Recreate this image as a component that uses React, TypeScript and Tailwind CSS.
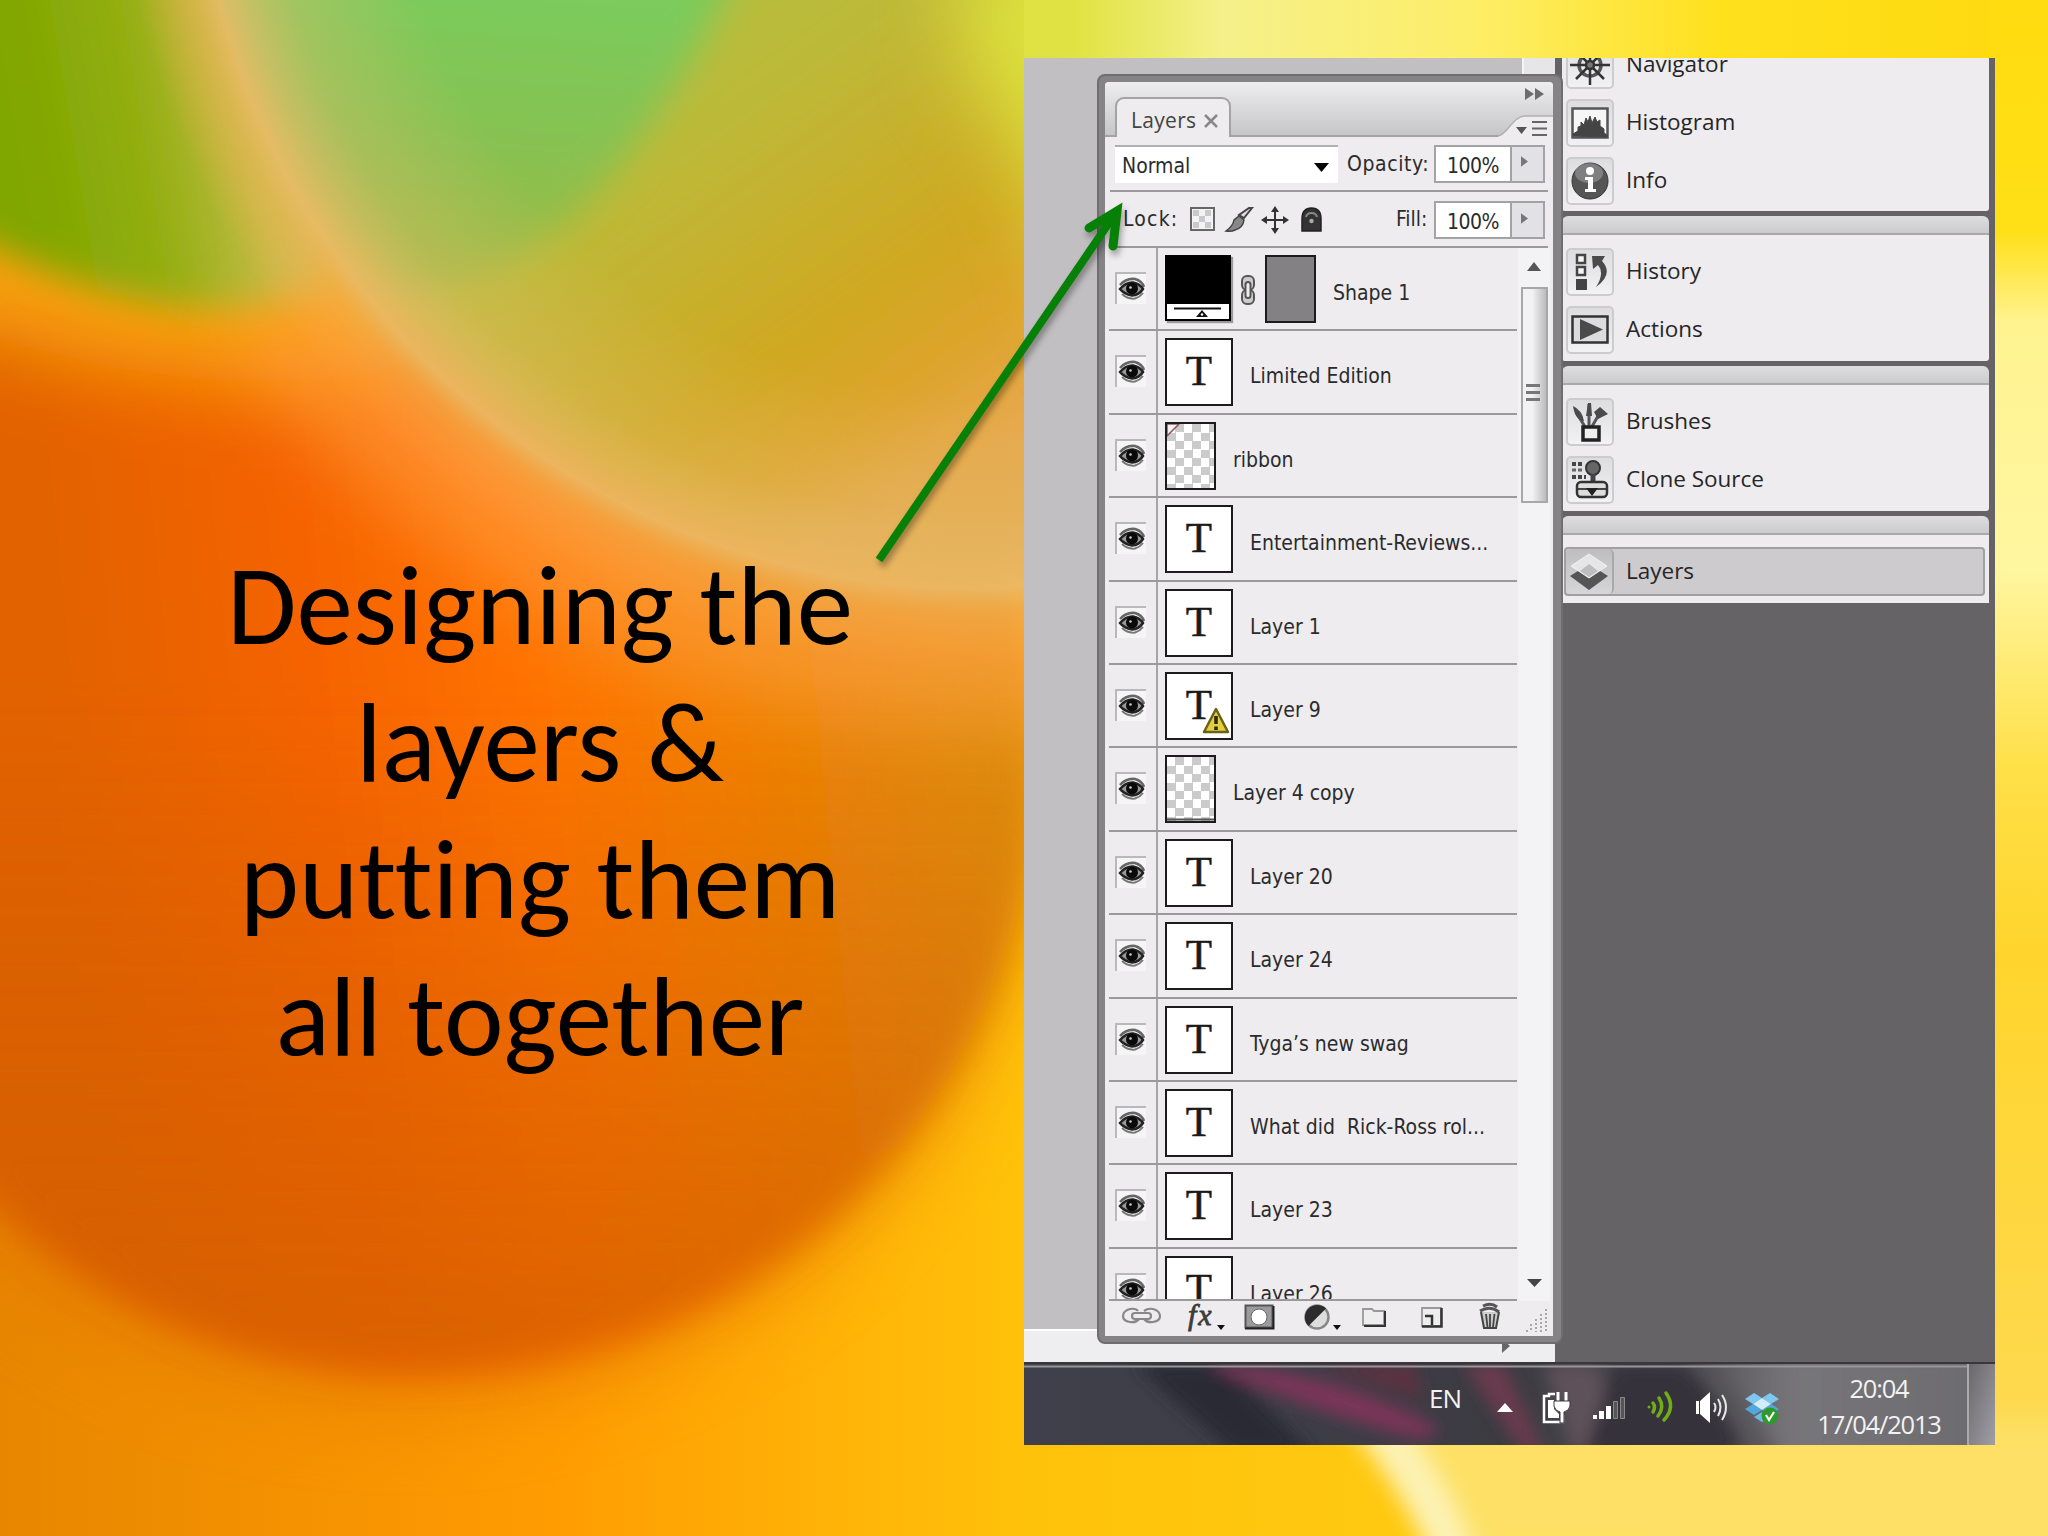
import type { ReactNode } from 'react';

type Thumb = 'shape' | 'text' | 'warning' | 'ribbon' | 'pixels';

interface Layer {
  name: string;
  thumb: Thumb;
}

const LAYERS: Layer[] = [
  { name: 'Shape 1', thumb: 'shape' },
  { name: 'Limited Edition', thumb: 'text' },
  { name: 'ribbon', thumb: 'ribbon' },
  { name: 'Entertainment-Reviews...', thumb: 'text' },
  { name: 'Layer 1', thumb: 'text' },
  { name: 'Layer 9', thumb: 'warning' },
  { name: 'Layer 4 copy', thumb: 'pixels' },
  { name: 'Layer 20', thumb: 'text' },
  { name: 'Layer 24', thumb: 'text' },
  { name: 'Tyga’s new swag', thumb: 'text' },
  { name: 'What did  Rick-Ross rol...', thumb: 'text' },
  { name: 'Layer 23', thumb: 'text' },
  { name: 'Layer 26', thumb: 'text' },
];

function Backdrop() {
  return (
    <svg className="absolute inset-0" width="2048" height="1536" viewBox="0 0 2048 1536" aria-hidden="true">
      <defs>
        <linearGradient id="base" x1="0" x2="1">
          <stop offset="0" stopColor="#e88600" />
          <stop offset="0.27" stopColor="#ff9c02" />
          <stop offset="0.5" stopColor="#ffc20a" />
          <stop offset="1" stopColor="#ffd61e" />
        </linearGradient>
        <linearGradient id="ball" gradientUnits="userSpaceOnUse" x1="0" y1="100" x2="1024" y2="0">
          <stop offset="0" stopColor="#e26200" />
          <stop offset="0.25" stopColor="#f56300" />
          <stop offset="0.45" stopColor="#ff7200" />
          <stop offset="0.62" stopColor="#f57e04" />
          <stop offset="0.8" stopColor="#e58808" />
          <stop offset="1" stopColor="#da920c" />
        </linearGradient>
        <linearGradient id="ballShade" gradientUnits="userSpaceOnUse" x1="0" y1="700" x2="0" y2="1380">
          <stop offset="0" stopColor="#c85a00" stopOpacity="0" />
          <stop offset="1" stopColor="#d46000" stopOpacity="0.8" />
        </linearGradient>
        <linearGradient id="lens" gradientUnits="userSpaceOnUse" x1="480" y1="80" x2="820" y2="560">
          <stop offset="0" stopColor="#b3c040" />
          <stop offset="0.3" stopColor="#bdb938" />
          <stop offset="0.68" stopColor="#d0a822" />
          <stop offset="0.85" stopColor="#dea42c" />
          <stop offset="1" stopColor="#e6a84c" />
        </linearGradient>
        <radialGradient id="rim" gradientUnits="userSpaceOnUse" cx="975" cy="-190" r="860">
          <stop offset="0.68" stopColor="#e0c070" stopOpacity="0" />
          <stop offset="0.82" stopColor="#e2bd6c" stopOpacity="0.35" />
          <stop offset="0.905" stopColor="#ecbb6a" stopOpacity="0.85" />
          <stop offset="0.93" stopColor="#f2b45c" stopOpacity="0.55" />
          <stop offset="1" stopColor="#ffaa4c" stopOpacity="0" />
        </radialGradient>
        <linearGradient id="mint" gradientUnits="userSpaceOnUse" x1="500" y1="0" x2="480" y2="270">
          <stop offset="0" stopColor="#7bcb5c" />
          <stop offset="0.5" stopColor="#86c252" />
          <stop offset="1" stopColor="#9cba44" />
        </linearGradient>
        <linearGradient id="leaf" gradientUnits="userSpaceOnUse" x1="0" y1="0" x2="240" y2="-40">
          <stop offset="0" stopColor="#80a600" />
          <stop offset="0.5" stopColor="#93ae10" />
          <stop offset="1" stopColor="#c8be50" />
        </linearGradient>
        <linearGradient id="topEdge" gradientUnits="userSpaceOnUse" x1="900" y1="0" x2="2048" y2="0">
          <stop offset="0" stopColor="#dae040" />
          <stop offset="0.15" stopColor="#e0e242" />
          <stop offset="0.28" stopColor="#f5f08a" />
          <stop offset="0.5" stopColor="#fdee68" />
          <stop offset="0.72" stopColor="#ffe01c" />
          <stop offset="1" stopColor="#fdd90e" />
        </linearGradient>
        <linearGradient id="rightEdge" x1="0" x2="0" y1="0" y2="1">
          <stop offset="0" stopColor="#ffdc10" />
          <stop offset="0.15" stopColor="#ffdf16" />
          <stop offset="0.21" stopColor="#fff390" />
          <stop offset="0.37" stopColor="#fff6a0" />
          <stop offset="0.5" stopColor="#ffe048" />
          <stop offset="0.62" stopColor="#ffd52c" />
          <stop offset="1" stopColor="#fdda58" />
        </linearGradient>
        <filter id="b8" x="-20%" y="-20%" width="140%" height="140%"><feGaussianBlur stdDeviation="8" /></filter>
        <filter id="b12" x="-100%" y="-60%" width="300%" height="220%"><feGaussianBlur stdDeviation="12" /></filter>
        <filter id="b18" x="-20%" y="-20%" width="140%" height="140%"><feGaussianBlur stdDeviation="18" /></filter>
        <filter id="b40" x="-50%" y="-50%" width="200%" height="200%"><feGaussianBlur stdDeviation="40" /></filter>
        <clipPath id="inLens"><circle cx="975" cy="-190" r="779" /></clipPath>
      </defs>
      <rect width="2048" height="1536" fill="url(#base)" />
      <circle cx="400" cy="770" r="640" fill="#e27800" opacity="0.6" filter="url(#b40)" />
      <circle cx="420" cy="753" r="618" fill="url(#ball)" filter="url(#b18)" />
      <circle cx="420" cy="753" r="618" fill="url(#ballShade)" filter="url(#b18)" />
      <path d="M-80 -80H420V360Q200 420 -80 310Z" fill="#f8a008" filter="url(#b40)" />
      <path d="M-60 -60H330V290Q170 350 -60 218Z" fill="url(#leaf)" filter="url(#b18)" />
      <path d="M300 280Q480 470 700 560Q860 610 1100 590V720Q800 730 600 640Q400 530 240 350Z" fill="#ffa448" opacity="0.6" filter="url(#b40)" />
      <circle cx="975" cy="-190" r="772" fill="url(#lens)" filter="url(#b18)" />
      <g clipPath="url(#inLens)">
        <path d="M190 -60H750Q700 60 630 150Q530 290 390 290Q290 200 190 -60Z" fill="url(#mint)" filter="url(#b18)" />
        <path d="M960 -60H1200V330H1090Q1040 160 960 60Z" fill="#dce03c" filter="url(#b40)" />
      </g>
      <circle cx="975" cy="-190" r="860" fill="url(#rim)" />
      <rect x="1024" width="1024" height="60" fill="url(#topEdge)" />
      <rect x="1990" width="58" height="1536" fill="url(#rightEdge)" />
      <path d="M1350 1420Q1400 1480 1440 1560H2100V1420Z" fill="#fde065" filter="url(#b12)" />
      <path d="M1350 1390Q1425 1470 1465 1580" fill="none" stroke="#fdf3b8" strokeWidth="40" filter="url(#b12)" />
    </svg>
  );
}

function PointerArrow() {
  return (
    <svg className="absolute top-[192px] left-[860px] drop-shadow-[2px_5px_3px_rgba(0,0,0,0.35)]" width="280" height="380" viewBox="860 192 280 380" fill="none" stroke="#068006" aria-hidden="true">
      <path d="M879 560L1115 214" strokeWidth="8" />
      <path d="M1089 228L1117 211L1113 246" strokeWidth="9" strokeLinecap="round" />
    </svg>
  );
}

function EyeIcon() {
  return (
    <svg width="28" height="24" viewBox="0 0 28 24" fill="none" aria-hidden="true">
      <path d="M2 8Q8 1 17 2Q24 4 26 10" stroke="#666" strokeWidth="2.500" />
      <path d="M2 12Q8 5 15 5.500Q22 7 25 12Q21 18 14 18.500Q6 17 2 12Z" fill="#999" stroke="#222" strokeWidth="2.500" />
      <circle cx="14" cy="11.500" r="6" fill="#0a0a0a" />
      <circle cx="12.500" cy="10.500" r="1.300" fill="#ccc" />
      <path d="M4 17Q10 22.500 17 21.500Q22 20 25 16" stroke="#777" strokeWidth="2" />
    </svg>
  );
}

function TextThumb({ warning = false }: { warning?: boolean }) {
  return (
    <div className="relative h-[68px] w-[68px] shrink-0 border-2 border-[#1c1c1c] bg-white text-center font-['Liberation_Serif',serif] text-[43px] leading-[62px] text-[#1a1a1a] [-webkit-text-stroke:0.5px_#1a1a1a]">
      T
      {warning && (
        <svg className="absolute right-[1px] bottom-[4px]" width="28" height="28" viewBox="0 0 28 28" aria-hidden="true">
          <path d="M14 3L26 26H2Z" fill="#e3cf3c" stroke="#6b6118" strokeWidth="2.500" strokeLinejoin="round" />
          <path d="M14 10V18M14 20.500V24" stroke="#2a2608" strokeWidth="3.500" />
        </svg>
      )}
    </div>
  );
}

function PixelThumb({ ribbon = false }: { ribbon?: boolean }) {
  return (
    <div className="h-[68px] w-[51px] shrink-0 border-2 border-[#1c1c1c] bg-white bg-[repeating-conic-gradient(#cbcbcb_0_25%,#fff_0_50%)] bg-[length:17px_17px]">
      <svg width="47" height="64" viewBox="0 0 47 64" fill="none" aria-hidden="true">
        {ribbon ? (
          <path d="M0 0H12L0 12Z" fill="#f6eef0" stroke="#8a5560" strokeWidth="1.500" />
        ) : (
          <path d="M0 62.500H47" stroke="#555" strokeWidth="2" />
        )}
      </svg>
    </div>
  );
}

function ShapeThumb() {
  return (
    <div className="flex shrink-0 items-start">
      <div className="flex h-[66px] w-[66px] flex-col justify-end border-2 border-black bg-black shadow-[2px_2px_1px_#999]">
        <svg className="bg-white" width="62" height="15" viewBox="0 0 62 15" aria-hidden="true">
          <path d="M7 4.500H54" stroke="#111" strokeWidth="2" />
          <path d="M35 6L41 13H29Z" fill="#111" />
          <circle cx="35" cy="10.500" r="1.200" fill="#fff" />
        </svg>
      </div>
      <svg className="mx-[7px] mt-[18px]" width="20" height="34" viewBox="0 0 20 34" fill="none" stroke="#555" strokeWidth="2" aria-hidden="true">
        <rect x="4" y="3" width="12" height="14" rx="5" fill="#ccc" />
        <rect x="4" y="17" width="12" height="14" rx="5" fill="#ccc" />
        <rect x="7.500" y="9" width="5" height="16" rx="2.500" fill="#eee" />
      </svg>
      <div className="h-[68px] w-[51px] border-2 border-[#1c1c1c] bg-[#838183]" />
    </div>
  );
}

function LayerThumb({ kind }: { kind: Thumb }) {
  if (kind === 'shape') return <ShapeThumb />;
  if (kind === 'ribbon') return <PixelThumb ribbon />;
  if (kind === 'pixels') return <PixelThumb />;
  return <TextThumb warning={kind === 'warning'} />;
}

function LayerRow({ layer }: { layer: Layer }) {
  return (
    <li className="flex h-[83.4px] shrink-0 border-b-2 border-[#9a999b]">
      <div className="w-[49px] shrink-0 border-r-2 border-[#a5a4a6] pt-[24px] pl-[6px]">
        <div className="flex h-[32px] w-[31px] items-center justify-center border-t-2 border-l-2 border-[#b9b8ba] bg-[#f6f5f6]">
          <EyeIcon />
        </div>
      </div>
      <div className="flex h-[75px] pt-[7px] pl-[7px]">
        <LayerThumb kind={layer.thumb} />
      </div>
      <span className="pt-[30px] pl-[17px] text-[21px] leading-[30px] whitespace-pre">{layer.name}</span>
    </li>
  );
}

function PercentField() {
  return (
    <div className="flex h-[38px] w-[111px] border-2 border-[#a3a2a4] bg-white">
      <span className="w-[74px] pt-px pl-[11px] text-[21px] leading-[36px] tracking-[-0.5px]">100%</span>
      <div className="flex flex-1 items-center justify-center border-l-2 border-[#a3a2a4] bg-[#e2e1e6] pr-[6px] pb-[4px]">
        <svg width="7" height="11" viewBox="0 0 8 12" aria-hidden="true">
          <path d="M0 0L8 6L0 12Z" fill="#77767f" />
        </svg>
      </div>
    </div>
  );
}

function PaletteHeader() {
  return (
    <div className="relative flex h-[55px] items-end border-b-2 border-[#a3a2a4] bg-linear-to-b from-[#eeedef] to-[#c6c5c7] pl-[10px]">
      <div className="-mb-[2px] flex h-[40px] w-[116px] items-center gap-[8px] rounded-t-[9px] border-2 border-b-0 border-[#a3a2a4] bg-[#eeecee] pt-[5px] pl-[14px]">
        <span className="font-['Open_Sans',sans-serif] text-[21px] tracking-[0.3px] text-[#444]">Layers</span>
        <svg width="14" height="14" viewBox="0 0 14 14" stroke="#888" strokeWidth="2.500" aria-hidden="true">
          <path d="M1 1L13 13M13 1L1 13" />
        </svg>
      </div>
      <svg className="absolute right-0 bottom-[-2px]" width="60" height="58" viewBox="0 -8 60 58" aria-hidden="true">
        <path d="M5 49.500C14 48 20 29 32 29H60V50H5Z" fill="#eeecee" />
        <path d="M5 49C14 48 20 29 32 29H60" fill="none" stroke="#b0afb1" strokeWidth="1.500" />
        <path d="M32 1L41 7L32 13ZM42 1L51 7L42 13Z" fill="#6c6b6d" />
        <path d="M23 40H34L28.500 47Z" fill="#555" />
        <path d="M39 35H54M39 41.500H54M39 48H54" stroke="#666" strokeWidth="2" />
      </svg>
    </div>
  );
}

function LockIcons() {
  return (
    <svg width="140" height="30" viewBox="1186 205 140 30" fill="none" aria-hidden="true">
      <rect x="1191" y="208" width="23" height="22" fill="#f4f3f4" stroke="#666" strokeWidth="2" />
      <path d="M1193 210h6v6h-6zM1205 210h6v6h-6zM1199 216h6v6h-6zM1193 222h6v6h-6zM1205 222h6v6h-6z" fill="#c9c8ca" />
      <path d="M1252 208L1244 218L1239 215L1249 208Z" fill="#ddd" stroke="#444" strokeWidth="2" />
      <path d="M1239 216L1244 220Q1243 228 1235 230Q1231 232 1226 231Q1233 226 1234 220Z" fill="#888" stroke="#444" strokeWidth="1.500" />
      <path d="M1275 208V232M1263 220H1287" stroke="#333" strokeWidth="2" />
      <path d="M1275 206L1279 212H1271ZM1275 234L1279 228H1271ZM1261 220L1267 216V224ZM1289 220L1283 216V224Z" fill="#333" />
      <path d="M1302 231V219Q1302 208 1311.500 208Q1321 208 1321 219V231Z" fill="#333" stroke="#222" strokeWidth="1.500" />
      <path d="M1306 217Q1307 213 1311.500 213Q1316 213 1317 217" stroke="#888" strokeWidth="2" />
      <circle cx="1311.500" cy="221" r="2.200" fill="#aaa" />
    </svg>
  );
}

function Scrollbar() {
  return (
    <div className="flex w-[32px] shrink-0 flex-col items-center bg-[#f3f2f4] pb-[14px]">
      <svg className="mt-[14px]" width="14" height="9" viewBox="0 0 14 9" aria-hidden="true">
        <path d="M7 0L14 9H0Z" fill="#555" />
      </svg>
      <div className="mt-[16px] flex h-[216px] w-[27px] flex-col items-center justify-center gap-[4px] border-2 border-[#a7a6a8] bg-linear-to-r from-[#f2f1f3] from-40% to-[#bcbbbd] pr-[2px] pb-[5px]">
        <div className="h-[3px] w-[14px] bg-[#777]" />
        <div className="h-[3px] w-[14px] bg-[#777]" />
        <div className="h-[3px] w-[14px] bg-[#777]" />
      </div>
      <svg className="mt-auto" width="15" height="8" viewBox="0 0 15 8" aria-hidden="true">
        <path d="M0 0H15L7.500 8Z" fill="#444" />
      </svg>
    </div>
  );
}

function PaletteFooter() {
  return (
    <svg className="shrink-0" width="448" height="35" viewBox="1105 1301 448 35" fill="none" aria-hidden="true">
      <g stroke="#88878a" strokeWidth="2.200">
        <path d="M1138 1311Q1136 1308 1130 1309Q1123 1311 1123 1316Q1123 1321 1130 1322Q1136 1323 1139 1319M1144 1311Q1148 1308 1153 1309Q1160 1311 1160 1316Q1160 1321 1153 1322Q1147 1323 1144 1319" />
        <rect x="1132" y="1313" width="19" height="6" rx="3" />
      </g>
      <text x="1188" y="1325" fill="#3c3c3c" stroke="#3c3c3c" strokeWidth="0.800" fontFamily="Liberation Serif" fontStyle="italic" fontSize="30" letterSpacing="2">fx</text>
      <path d="M1217 1325H1225L1221 1330Z" fill="#111" />
      <rect x="1245.500" y="1305.500" width="27" height="22" fill="#9b9a9c" stroke="#555" strokeWidth="2" />
      <path d="M1245 1328.500H1273.500V1306" stroke="#222" strokeWidth="2" />
      <circle cx="1259" cy="1317" r="8" fill="#fff" stroke="#666" strokeWidth="1" />
      <circle cx="1317" cy="1317" r="11.500" fill="#ddd" stroke="#888" strokeWidth="2.500" />
      <path d="M1308.500 1326A12 12 0 0 1 1326 1308.500Z" fill="#2c2c2c" />
      <path d="M1333 1325H1341L1337 1330Z" fill="#111" />
      <path d="M1363 1325V1309H1372L1374 1311H1384V1325Z" fill="#eee" stroke="#999" strokeWidth="1.800" />
      <path d="M1364 1326H1385V1311" stroke="#333" strokeWidth="2" />
      <path d="M1422 1308H1441V1326H1422Z" fill="#eee" stroke="#999" strokeWidth="1.800" />
      <path d="M1422 1326.500H1441.500V1308M1425 1316H1432V1325" stroke="#333" strokeWidth="2.500" />
      <path d="M1481 1312L1484 1328H1496L1499 1312" fill="#ccc" stroke="#444" strokeWidth="2" />
      <path d="M1486 1314L1487.500 1327M1490 1314V1327M1494.500 1314L1493 1327" stroke="#444" strokeWidth="1.800" />
      <path d="M1480 1311Q1490 1305 1499 1312M1483 1306Q1491 1302 1497 1307" stroke="#555" strokeWidth="3" />
      <path d="M1546 1309V1332M1541 1314V1332M1536 1319V1332M1531 1324V1332M1527 1330V1332" stroke="#a8a7a9" strokeWidth="2" strokeDasharray="2 2" />
    </svg>
  );
}

function LayersPalette() {
  return (
    <div className="absolute top-[16px] left-[73px] flex h-[1270px] w-[466px] flex-col rounded-[8px] border-[2px] border-[#6f6d70] bg-[#858386] pt-[6px] pr-[8px] pb-[6px] pl-[6px] font-['DejaVu_Sans_Condensed','DejaVu_Sans',sans-serif] text-[#2b2b2d]">
      <div className="flex min-h-0 flex-1 flex-col overflow-hidden rounded-t-[4px] bg-[#eeecee]">
        <PaletteHeader />
        <div className="mx-[5px] flex h-[55px] shrink-0 items-center border-b-2 border-[#9a999b] pl-[5px]">
          <div className="flex h-[38px] w-[223px] items-center justify-between border-t-2 border-[#b0afb1] bg-white pr-[9px] pl-[7px]">
            <span className="pt-[3px] text-[21px] leading-[34px]">Normal</span>
            <svg className="mt-[6px]" width="15" height="9" viewBox="0 0 15 9" aria-hidden="true">
              <path d="M0 0H15L7.500 9Z" fill="#000" />
            </svg>
          </div>
          <span className="ml-[9px] w-[87px] pt-px text-[21px] leading-[34px] tracking-[0.6px]">Opacity:</span>
          <PercentField />
        </div>
        <div className="mx-[5px] flex h-[56px] shrink-0 items-center border-b-2 border-[#9a999b] pt-[2px] pl-[13px]">
          <span className="w-[63px] text-[21px] tracking-[1.2px]">Lock:</span>
          <LockIcons />
          <span className="ml-[70px] w-[38px] text-[21px]">Fill:</span>
          <PercentField />
        </div>
        <div className="flex h-[1053px] shrink-0 pl-[4px]">
          <ul className="flex w-[408px] shrink-0 flex-col overflow-hidden border-b-2 border-[#9a999b]">
            {LAYERS.map((layer) => (
              <LayerRow key={layer.name} layer={layer} />
            ))}
          </ul>
          <div className="ml-[1px] flex">
            <Scrollbar />
          </div>
        </div>
        <PaletteFooter />
      </div>
    </div>
  );
}

interface DockItemProps {
  label: string;
  icon: ReactNode;
  active?: boolean;
}

function DockItem({ label, icon, active = false }: DockItemProps) {
  return (
    <div
      className={
        active
          ? 'mr-[4px] ml-[2px] flex h-[49px] items-center rounded-[4px] border-2 border-[#a09fa1] bg-[#cdcbce]'
          : 'ml-[4px] flex h-[49px] items-center'
      }
    >
      <div
        className={
          active
            ? 'flex h-[45px] w-[48px] shrink-0 items-center justify-center rounded-[5px] border-r-2 border-[#a9a8aa] bg-linear-to-b from-[#bebdbf] to-[#d6d5d7]'
            : 'flex h-[48px] w-[48px] shrink-0 items-center justify-center rounded-[5px] border-2 border-[#cccbcd] bg-linear-to-b from-[#dddcde] to-[#f2f1f3]'
        }
      >
        <svg width="40" height="40" viewBox="0 0 40 40" fill="none" aria-hidden="true">
          {icon}
        </svg>
      </div>
      <span className="pb-[2px] pl-[12px] font-['Open_Sans',sans-serif] text-[22.500px] leading-[30px] text-[#262628]">{label}</span>
    </div>
  );
}

function DockHeader() {
  return <div className="mt-[5px] h-[19px] shrink-0 rounded-t-[6px] border-b-2 border-[#a9a8aa] bg-linear-to-b from-[#dedddf] to-[#cbcacc]" />;
}

const ICONS = {
  navigator: (
    <g stroke="#333" strokeWidth="2.500">
      <circle cx="20" cy="20" r="11" stroke="#555" strokeWidth="3.500" />
      <path d="M20 0V40M0 20H40M6 6L34 34M34 6L6 34" />
      <circle cx="20" cy="20" r="4" fill="#777" />
    </g>
  ),
  histogram: (
    <>
      <rect x="2.500" y="5.500" width="35" height="29" fill="#f6f6f6" stroke="#555" strokeWidth="2.500" />
      <path d="M3 33V31L8 28V24L11 23V19L14 22L16 15L18 19L20 13L22 20L25 14L27 19L30 17V23L34 26V30L37 32V34Z" fill="#444" stroke="#444" />
    </>
  ),
  info: (
    <>
      <circle cx="20" cy="20" r="18" fill="#555" stroke="#333" />
      <ellipse cx="19" cy="12" rx="14" ry="10" fill="#fff" opacity="0.25" />
      <circle cx="20" cy="10" r="4" fill="#fff" />
      <path d="M15 16H23V28H26V31H15V28H18V19H15Z" fill="#fff" />
    </>
  ),
  history: (
    <>
      <path d="M7 3H15V11H7ZM7 15H15V23H7Z" fill="#f5f5f5" stroke="#444" strokeWidth="2.500" />
      <rect x="6" y="27" width="11" height="11" fill="#444" />
      <path d="M22 4H35L32 9Q44 22 26 35Q35 21 28 13L23 17Z" fill="#4a4a4a" />
    </>
  ),
  actions: (
    <>
      <rect x="2.500" y="6.500" width="35" height="26" fill="#dcdbdd" stroke="#333" strokeWidth="2.500" />
      <path d="M10 9L33 19.500L10 30Z" fill="#4a4a4a" />
    </>
  ),
  brushes: (
    <>
      <path d="M6 10L17 28M19 2V26M28 14L20 28" stroke="#555" strokeWidth="3" />
      <path d="M3 4Q12 8 14 19Q5 18 3 4ZM18 1H21L22 14H16ZM24 10L30 5L38 12L28 17Z" fill="#4a4a4a" />
      <path d="M13 25H29V38H13Z" fill="#eee" stroke="#222" strokeWidth="3.500" />
    </>
  ),
  clone: (
    <>
      <path d="M2 4H14M2 17H16" stroke="#444" strokeWidth="4" strokeDasharray="4 2" />
      <path d="M2 10H13" stroke="#666" strokeWidth="3" strokeDasharray="4 2" />
      <circle cx="23" cy="8" r="7" fill="#666" stroke="#333" strokeWidth="2" />
      <path d="M23 14V23" stroke="#444" strokeWidth="5" />
      <rect x="7" y="22" width="30" height="15" rx="4" fill="#ddd" stroke="#333" strokeWidth="2.500" />
      <path d="M8 29H36" stroke="#444" strokeWidth="2" />
      <path d="M16 28H28L22 36Z" fill="#222" />
    </>
  ),
  layers: (
    <>
      <path d="M1 24L20 12L39 24L20 38Z" fill="#555" />
      <path d="M2 14L20 2L38 14L20 26Z" fill="#e6e5e7" stroke="#f2f1f3" />
      <path d="M20 12L29 19L20 25L11 19Z" fill="#bdbcbe" />
    </>
  ),
};

function Dock() {
  return (
    <aside className="flex w-[440px] flex-col bg-[#656365] pr-[6px] pl-[7px]">
      <div className="flex h-[153px] shrink-0 flex-col gap-[9px] overflow-hidden rounded-b-[3px] bg-[#eeecee]">
        <div className="-mt-[18px]">
          <DockItem label="Navigator" icon={ICONS.navigator} />
        </div>
        <DockItem label="Histogram" icon={ICONS.histogram} />
        <DockItem label="Info" icon={ICONS.info} />
      </div>
      <DockHeader />
      <div className="flex h-[126px] shrink-0 flex-col gap-[9px] rounded-b-[3px] bg-[#eeecee] pt-[12px]">
        <DockItem label="History" icon={ICONS.history} />
        <DockItem label="Actions" icon={ICONS.actions} />
      </div>
      <DockHeader />
      <div className="flex h-[126px] shrink-0 flex-col gap-[9px] rounded-b-[3px] bg-[#eeecee] pt-[12px]">
        <DockItem label="Brushes" icon={ICONS.brushes} />
        <DockItem label="Clone Source" icon={ICONS.clone} />
      </div>
      <DockHeader />
      <div className="h-[68px] shrink-0 bg-[#eeecee] pt-[12px]">
        <DockItem label="Layers" icon={ICONS.layers} active />
      </div>
    </aside>
  );
}

function TrayIcons() {
  return (
    <svg className="absolute -top-px left-[464px]" width="310" height="83" viewBox="1488 1362 310 83" fill="none" aria-hidden="true">
      <path d="M1497 1411L1505 1402L1513 1411Z" fill="#fff" />
      <path d="M1555 1393H1549V1395H1544V1421H1563V1414" stroke="#fff" strokeWidth="2.500" />
      <path d="M1548 1399H1554V1408L1559 1413V1417H1548Z" fill="#fff" />
      <path d="M1558 1391V1400M1566 1391V1400" stroke="#fff" strokeWidth="3" />
      <path d="M1554 1400H1570V1405Q1569 1410 1564 1411V1422H1560V1411Q1555 1410 1554 1405Z" fill="#fff" stroke="#3a383d" strokeWidth="1" />
      <path d="M1593 1414h4v4h-4zM1599 1410h5v8h-5zM1606 1405h5v13h-5z" fill="#fff" />
      <path d="M1613.500 1400.500h4v17h-4zM1620.500 1396.500h4v21h-4z" fill="#555" stroke="#888" />
      <g stroke="#6fae14" strokeWidth="3.500" strokeLinecap="round">
        <circle cx="1649" cy="1406" r="1.500" fill="#6fae14" stroke="none" />
        <path d="M1653 1402Q1656 1406 1653 1411" />
        <path d="M1659 1397Q1665 1406 1658 1415" />
        <path d="M1666 1392Q1676 1406 1664 1419" />
      </g>
      <path d="M1696 1400H1699V1413H1696ZM1700 1400L1710 1391V1422L1700 1413Z" fill="#fff" />
      <path d="M1714 1402Q1717 1406 1714 1411M1718 1398Q1723 1406 1718 1415M1722 1394Q1730 1406 1722 1419" stroke="#e8e8e8" strokeWidth="2" />
      <path d="M1754 1392L1762 1397L1753 1403L1745 1398ZM1770 1392L1779 1398L1771 1403L1762 1397Z" fill="#7cc8f0" />
      <path d="M1745 1408L1753 1403L1762 1409L1754 1414ZM1779 1408L1771 1403L1762 1409L1770 1414Z" fill="#4fa8de" />
      <path d="M1762 1397L1771 1403L1762 1409L1753 1403Z" fill="#d2ecfa" />
      <path d="M1754 1416L1762 1411L1770 1416L1762 1421Z" fill="#6dbce8" />
      <circle cx="1770" cy="1415" r="8.500" fill="#2f9a2c" />
      <path d="M1766 1414L1769 1419L1774 1411" stroke="#fff" strokeWidth="2.200" />
    </svg>
  );
}

function Taskbar() {
  return (
    <div className="relative flex h-[83px] shrink-0 overflow-hidden border-t-2 border-[#39373b] bg-linear-to-r from-[#40404c] via-[#3c3b42] to-[#757376] font-['Open_Sans',sans-serif] text-[#f2f2f2]">
      <svg className="absolute inset-0" width="971" height="81" viewBox="0 0 971 81" fill="none" aria-hidden="true">
        <defs>
          <filter id="soft" x="-10%" y="-30%" width="120%" height="160%"><feGaussianBlur stdDeviation="8" /></filter>
          <linearGradient id="haze">
            <stop offset="0" stopColor="#77757a" stopOpacity="0" />
            <stop offset="0.3" stopColor="#777579" />
            <stop offset="1" stopColor="#6b6a6e" />
          </linearGradient>
        </defs>
        <g filter="url(#soft)">
          <path d="M110 0H200L290 90H210Z" fill="#2c2b36" />
          <path d="M190 0Q310 6 415 64L400 76Q310 56 190 4Z" fill="#7a3458" />
          <path d="M290 0H390L400 36Z" fill="#5c3040" />
          <path d="M440 0L480 0L520 90H500Z" fill="#6a3a4e" />
          <path d="M520 0H570L600 90H550Z" fill="#6f5a66" opacity="0.6" />
          <path d="M590 0H660Q700 40 720 90H560Z" fill="#35323a" />
          <path d="M680 -10H980V100H760Q720 30 680 -10Z" fill="url(#haze)" />
        </g>
        <path d="M0 2.500H971" stroke="#97959a" strokeWidth="2" />
      </svg>
      <span className="relative pt-[14px] pl-[405px] text-[26px] leading-[40px] tracking-[-1px]">EN</span>
      <TrayIcons />
      <div className="absolute top-[6px] left-[783px] w-[144px] text-center text-[25.500px] leading-[36px] tracking-[-1.2px]">
        <div>20:04</div>
        <div>17/04/2013</div>
      </div>
      <div className="relative ml-auto h-full w-[28px] border-l-2 border-[#aaa] bg-linear-to-br from-[#6a686c] to-[#a09fa6]" />
    </div>
  );
}

function Screen() {
  return (
    <section className="relative mt-[58px] flex h-[1387px] w-[971px] flex-col overflow-hidden" aria-label="Layers palette">
      <div className="flex h-[1304px] shrink-0">
        <div className="flex w-[531px] flex-col bg-[#c1bfc1]">
          <div className="flex flex-1 justify-end">
            <div className="w-[33px] border-l-2 border-[#f6f5f6] bg-[#e6e5e7]" />
          </div>
          <div className="flex h-[33px] items-end justify-end border-t-2 border-white bg-[#eeedef]">
            <svg className="mr-[45px] mb-[9px]" width="8" height="14" viewBox="0 0 8 14" aria-hidden="true">
              <path d="M0 0L8 7L0 14Z" fill="#666" />
            </svg>
          </div>
        </div>
        <Dock />
      </div>
      <LayersPalette />
      <Taskbar />
    </section>
  );
}

export default function App() {
  return (
    <main className="relative flex h-[1536px] w-[2048px] overflow-hidden">
      <Backdrop />
      <div className="relative w-[1024px] shrink-0 pt-[537px] pl-[56px]">
        <h1 className="w-[968px] text-center font-['Carlito','Lato',sans-serif] text-[113px] leading-[137px] text-black [font-variant-ligatures:none]">
          Designing the
          <br />
          layers &amp;
          <br />
          putting them
          <br />
          all together
        </h1>
      </div>
      <Screen />
      <PointerArrow />
    </main>
  );
}
